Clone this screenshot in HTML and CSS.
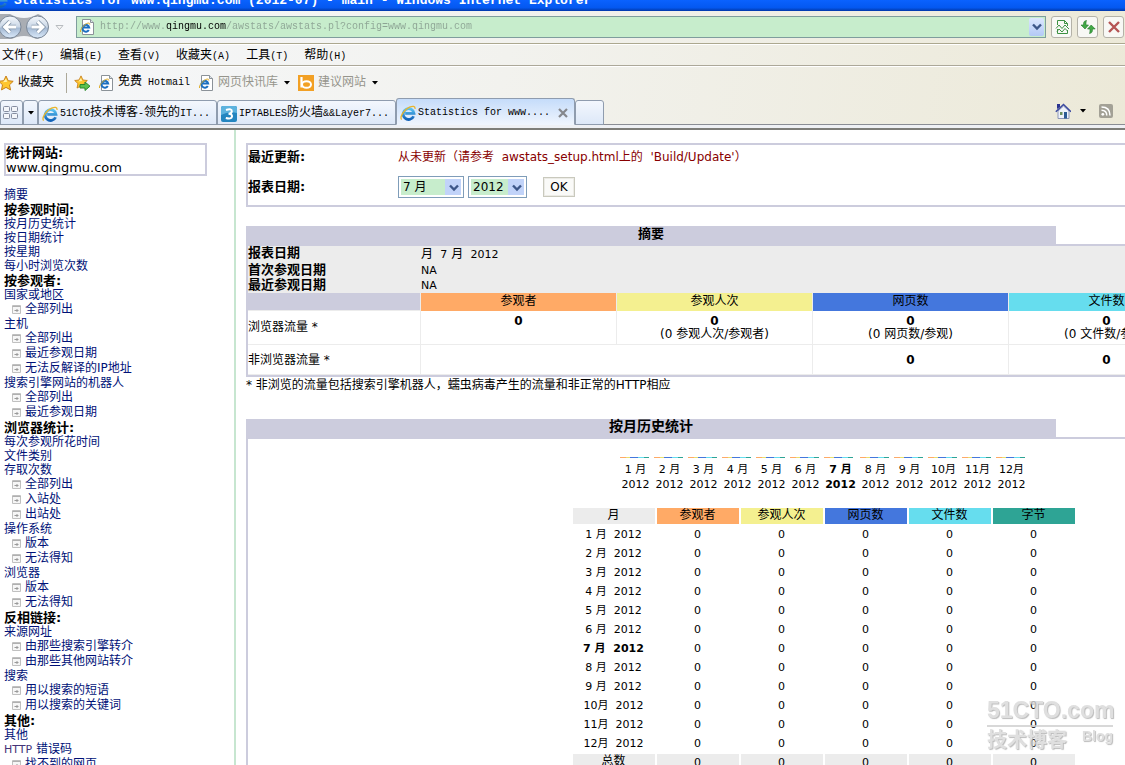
FILE: index.html
```html
<!DOCTYPE html>
<html lang="zh-CN">
<head>
<meta charset="utf-8">
<title>Statistics for www.qingmu.com (2012-07)</title>
<link rel="stylesheet" href="styles.css">
</head>
<body>
<svg class="defs" aria-hidden="true">
  <defs>
    <linearGradient id="ieblue" x1="0" y1="0" x2="0" y2="1"><stop offset="0" stop-color="#5cc4f2"/><stop offset="1" stop-color="#1262b8"/></linearGradient>
    <linearGradient id="ball" x1="0" y1="0" x2="0" y2="1"><stop offset="0" stop-color="#f6f9fc"/><stop offset=".5" stop-color="#c9d6e6"/><stop offset=".55" stop-color="#a4b9d3"/><stop offset="1" stop-color="#dbeafa"/></linearGradient>
    <symbol id="ie" viewBox="0 0 16 16">
      <path d="M13.6 11.2A5.4 5.4 0 1 1 14 8.4H5.2" fill="none" stroke="url(#ieblue)" stroke-width="2.8"/>
      <path d="M1.6 14.6C-.6 11.8 4 4.800 9.500 2.200C12.600.8 15.400.8 15 3.800" fill="none" stroke="#e9b52c" stroke-width="1.3"/>
    </symbol>
    <symbol id="page" viewBox="0 0 16 16">
      <path d="M3.500.5H11.500L14.500 3.500V15.500H3.500Z" fill="#fff" stroke="#8b9298"/>
      <path d="M11.500.5V3.500H14.500" fill="#dde3ea" stroke="#8b9298"/>
      <path d="M9.800 11A3.400 3.400 0 1 1 10.200 8.600H4.500" fill="none" stroke="#1b6fc0" stroke-width="2"/>
      <path d="M1.500 13C1 10.500 4 6.500 7.500 4.600C9.600 3.600 11.200 3.900 10.800 5.600" fill="none" stroke="#dfae2c"/>
    </symbol>
    <symbol id="star" viewBox="0 0 16 16"><path d="M8 1L10.200 5.700L15.200 6.300L11.500 9.800L12.500 14.900L8 12.400L3.500 14.900L4.500 9.800L.8 6.300L5.800 5.700Z" fill="#ffc62e" stroke="#c8801a"/><path d="M8 3.500L9.300 6.800L5 7.300Z" fill="#fff0a8"/></symbol>
    <symbol id="caret" viewBox="0 0 6 4"><path d="M0 0H6L3 3.500Z" fill="#000"/></symbol>
    <symbol id="chev" viewBox="0 0 10 8"><path d="M1 1.500L5 5.500L9 1.500" fill="none" stroke="#3c5688" stroke-width="2.400"/></symbol>
    <symbol id="sub" viewBox="0 0 9 9"><path d="M.5.5H8.500V8.500H.5Z" fill="#f6f6f6" stroke="#c0c0c0"/><path d="M.5 1.500H8.500" stroke="#b0b0b0"/><path d="M2.500 5.500H6.500M5 4V7" stroke="#999"/></symbol>
  </defs>
</svg>

<header class="browser">
  <div class="titlebar"><svg class="i16"><use href="#ie"/></svg><span>Statistics for www.qingmu.com (2012-07) - main - Windows Internet Explorer</span></div>

  <div class="address">
    <svg class="navballs" viewBox="0 0 66 28" role="img" aria-label="后退 前进">
      <path d="M0 1H38A13 13 0 0 1 38 26H0Z" fill="#a9adb3"/>
      <path d="M10 1Q24 9 38 1Z" fill="#f4f6f8"/>
      <path d="M10 27Q24 19 38 27Z" fill="#f4f6f8"/>
      <circle cx="10" cy="14" r="11" fill="url(#ball)" stroke="#7a8797"/>
      <circle cx="37.500" cy="14" r="11" fill="url(#ball)" stroke="#7a8797"/>
      <path d="M16 14H5M10 8.500L4.500 14L10 19.500" fill="none" stroke="#8496ab" stroke-width="4.500"/>
      <path d="M16 14H5M10 8.500L4.500 14L10 19.500" fill="none" stroke="#fff" stroke-width="2.800"/>
      <path d="M31.500 14H42.500M37.500 8.500L43 14L37.500 19.500" fill="none" stroke="#8496ab" stroke-width="4.500"/>
      <path d="M31.500 14H42.500M37.500 8.500L43 14L37.500 19.500" fill="none" stroke="#fff" stroke-width="2.800"/>
      <path d="M56 12.500H63L59.500 16.500Z" fill="#f6f6f6" stroke="#b8bcc0"/>
    </svg>
    <div class="urlbox">
      <svg class="i16"><use href="#page"/></svg>
      <input class="url" type="text" aria-label="地址" value="http://www.qingmu.com/awstats/awstats.pl?config=www.qingmu.com">
      <button class="drop" aria-label="显示地址"><svg class="chev"><use href="#chev"/></svg></button>
    </div>
    <div class="navbtns">
      <button class="tool" aria-label="兼容性视图"><svg class="i16" viewBox="0 0 16 16" fill="none" stroke="#3d9142"><path d="M3.500 6V1.500H10.500L13.500 4.500V7M10.500 1.500V4.500H13.500M3.500 10V14.500H13.500V11"/><path d="M2 9.500L5 6L8 9.500L11 6L15 10M3 12.500L5 10L8 13L11 9.500L13.500 12"/></svg></button>
      <button class="tool" aria-label="刷新"><svg class="i16" viewBox="0 0 16 16"><path d="M6.500 1.500C3.500 2 3.500 4 3.500 6H1L5 10L8.500 6H6C6 4 6 3 6.500 1.500Z" fill="#42a846" stroke="#23782a" stroke-width=".6"/><path d="M9.500 14.500C12.500 14 12.500 12 12.500 10H15.200L11.200 6L7.500 10H10C10 12 10 13 9.500 14.500Z" fill="#42a846" stroke="#23782a" stroke-width=".6"/></svg></button>
      <button class="tool" aria-label="停止"><svg class="i16" viewBox="0 0 16 16"><path d="M3 3L13 13M13 3L3 13" stroke="#b55454" stroke-width="2.400"/></svg></button>
    </div>
  </div>

  <nav class="menu">
    <a href="#">文件<span class="en">(F)</span></a><a href="#">编辑<span class="en">(E)</span></a><a href="#">查看<span class="en">(V)</span></a><a href="#">收藏夹<span class="en">(A)</span></a><a href="#">工具<span class="en">(T)</span></a><a href="#">帮助<span class="en">(H)</span></a>
  </nav>

  <div class="favs">
    <button class="fav first"><svg class="i16"><use href="#star"/></svg>收藏夹</button>
    <button class="fav add" aria-label="添加到收藏夹栏"><svg class="i16" viewBox="0 0 16 16"><use href="#star" width="14" height="14"/><path d="M6 9.500H11V7L16 11.200L11 15.500V13H6Z" fill="#5cc04e" stroke="#2c8a2c"/></svg></button>
    <a class="fav" href="#"><svg class="i16"><use href="#page"/></svg><span>免费<span class="en">&nbsp;Hotmail</span></span></a>
    <a class="fav dim" href="#"><svg class="i16"><use href="#page"/></svg>网页快讯库<svg class="caret"><use href="#caret"/></svg></a>
    <a class="fav dim" href="#"><svg class="i16" viewBox="0 0 16 16"><rect width="16" height="16" fill="#f2a024"/><path d="M3.500 2V12.500" stroke="#fff" stroke-width="2.200"/><ellipse cx="8.500" cy="9.500" rx="4.500" ry="3.300" fill="none" stroke="#fff" stroke-width="2"/></svg>建议网站<svg class="caret"><use href="#caret"/></svg></a>
  </div>

  <div class="tabs">
    <button class="quick" aria-label="快速导航选项卡"><svg class="i16" viewBox="0 0 16 16" fill="#f4f6fa" stroke="#858da0"><rect x=".5" y="1.500" width="6" height="5" rx="1"/><rect x="8.500" y="1.500" width="6" height="5" rx="1"/><rect x=".5" y="8.500" width="6" height="5" rx="1"/><rect x="8.500" y="8.500" width="6" height="5" rx="1"/></svg></button>
    <button class="quick narrow" aria-label="选项卡列表"><svg class="caret"><use href="#caret"/></svg></button>
    <a class="tab" href="#"><svg class="i16"><use href="#ie"/></svg><span><span class="en">51CTO</span>技术博客<span class="en">-</span>领先的<span class="en">IT...</span></span></a>
    <a class="tab" href="#"><svg class="i16" viewBox="0 0 16 16"><rect width="16" height="16" rx="2" fill="#2385c0"/><path d="M0 2Q0 0 2 0H14Q16 0 16 2V7Q8 5 0 9Z" fill="#5cb2de"/><path d="M5 4Q11 2 10.800 5.500Q10.500 7.700 7.500 7.700Q11.300 7.800 11 10.500Q10.500 13.500 4.800 12" fill="none" stroke="#fff" stroke-width="2"/></svg><span><span class="en">IPTABLES</span>防火墙<span class="en">&amp;&amp;Layer7...</span></span></a>
    <a class="tab active" href="#"><svg class="i16"><use href="#ie"/></svg><span class="en">Statistics for www....</span><svg class="close" viewBox="0 0 10 10"><path d="M1 1L9 9M9 1L1 9" stroke="#85878c" stroke-width="2.200"/></svg></a>
    <button class="newtab" aria-label="新选项卡"></button>
    <div class="cmds">
      <svg class="i16" viewBox="0 0 16 16"><path d="M3 8V15.500H14V8L8.500 3Z" fill="#eef2fb" stroke="#8c96b8"/><path d="M.8 8.700L8.500 1.500L16 8.700" fill="none" stroke="#3b49a0" stroke-width="1.500"/><path d="M2 1H5V4L2 6Z" fill="#2a3390"/><path d="M9 9H12V15.500H9Z" fill="#2b5a94"/><path d="M5 9H7.500V12H5Z" fill="#6a8f5e"/></svg>
      <svg class="caret"><use href="#caret"/></svg>
      <svg class="rss" viewBox="0 0 14 14"><rect width="14" height="14" rx="2" fill="#a3a196"/><circle cx="3.800" cy="10.300" r="1.400" fill="#fff"/><path d="M2.500 6.200Q7.800 6.200 7.800 11.500M2.500 3Q11 3 11 11.500" fill="none" stroke="#fff" stroke-width="1.500"/></svg>
    </div>
  </div>
</header>

<div class="frames">
  <aside class="side">
    <div class="site"><b>统计网站:</b><span>www.qingmu.com</span></div>
    <ul class="toc">
      <li><a href="#">摘要</a></li>
      <li class="head">按参观时间:</li>
      <li><a href="#">按月历史统计</a></li>
      <li><a href="#">按日期统计</a></li>
      <li><a href="#">按星期</a></li>
      <li><a href="#">每小时浏览次数</a></li>
      <li class="head">按参观者:</li>
      <li><a href="#">国家或地区</a></li>
      <li class="sub"><svg><use href="#sub"/></svg><a href="#">全部列出</a></li>
      <li><a href="#">主机</a></li>
      <li class="sub"><svg><use href="#sub"/></svg><a href="#">全部列出</a></li>
      <li class="sub"><svg><use href="#sub"/></svg><a href="#">最近参观日期</a></li>
      <li class="sub"><svg><use href="#sub"/></svg><a href="#">无法反解译的IP地址</a></li>
      <li><a href="#">搜索引擎网站的机器人</a></li>
      <li class="sub"><svg><use href="#sub"/></svg><a href="#">全部列出</a></li>
      <li class="sub"><svg><use href="#sub"/></svg><a href="#">最近参观日期</a></li>
      <li class="head">浏览器统计:</li>
      <li><a href="#">每次参观所花时间</a></li>
      <li><a href="#">文件类别</a></li>
      <li><a href="#">存取次数</a></li>
      <li class="sub"><svg><use href="#sub"/></svg><a href="#">全部列出</a></li>
      <li class="sub"><svg><use href="#sub"/></svg><a href="#">入站处</a></li>
      <li class="sub"><svg><use href="#sub"/></svg><a href="#">出站处</a></li>
      <li><a href="#">操作系统</a></li>
      <li class="sub"><svg><use href="#sub"/></svg><a href="#">版本</a></li>
      <li class="sub"><svg><use href="#sub"/></svg><a href="#">无法得知</a></li>
      <li><a href="#">浏览器</a></li>
      <li class="sub"><svg><use href="#sub"/></svg><a href="#">版本</a></li>
      <li class="sub"><svg><use href="#sub"/></svg><a href="#">无法得知</a></li>
      <li class="head">反相链接:</li>
      <li><a href="#">来源网址</a></li>
      <li class="sub"><svg><use href="#sub"/></svg><a href="#">由那些搜索引擎转介</a></li>
      <li class="sub"><svg><use href="#sub"/></svg><a href="#">由那些其他网站转介</a></li>
      <li><a href="#">搜索</a></li>
      <li class="sub"><svg><use href="#sub"/></svg><a href="#">用以搜索的短语</a></li>
      <li class="sub"><svg><use href="#sub"/></svg><a href="#">用以搜索的关键词</a></li>
      <li class="head">其他:</li>
      <li><a href="#">其他</a></li>
      <li class="latin"><a href="#"><span class="lat visited">HTTP</span> 错误码</a></li>
      <li class="sub"><svg><use href="#sub"/></svg><a href="#">找不到的网页</a></li>
    </ul>
  </aside>

  <main class="main">
    <div class="report">
      <form class="panel">
        <b>最近更新:</b>
        <span class="warn">从未更新（请参考&nbsp; awstats_setup.html上的&nbsp; 'Build/Update'）</span>
        <b>报表日期:</b>
        <div class="pick">
          <span class="sel month"><select aria-label="月份"><option>7 月</option></select><svg class="chev"><use href="#chev"/></svg></span>
          <span class="sel"><select aria-label="年份"><option>2012</option></select><svg class="chev"><use href="#chev"/></svg></span>
          <button class="ok" type="button">OK</button>
        </div>
      </form>

      <section>
        <h2 class="title">摘要</h2>
        <table class="summary">
          <colgroup><col class="label"><col><col><col><col><col></colgroup>
          <tbody class="meta">
            <tr><th>报表日期</th><td colspan="5">月 <span class="lat"> 7</span> 月 <span class="lat"> 2012</span></td></tr>
            <tr><th>首次参观日期</th><td colspan="5" class="lat">NA</td></tr>
            <tr><th>最近参观日期</th><td colspan="5" class="lat">NA</td></tr>
          </tbody>
          <tbody class="traffic">
            <tr class="heads"><td class="c-head"></td><th class="c-u">参观者</th><th class="c-v">参观人次</th><th class="c-p">网页数</th><th class="c-h">文件数</th><th class="c-k">字节</th></tr>
            <tr class="viewed"><td>浏览器流量 *</td><td><b>0</b><br>&nbsp;</td><td><b>0</b><br>(0 参观人次/参观者)</td><td><b>0</b><br>(0 网页数/参观)</td><td><b>0</b><br>(0 文件数/参观)</td><td><b>0</b><br>&nbsp;</td></tr>
            <tr class="other"><td>非浏览器流量 *</td><td colspan="2"></td><td><b>0</b></td><td><b>0</b></td><td><b>0</b></td></tr>
          </tbody>
        </table>
        <p class="note">* 非浏览的流量包括搜索引擎机器人，蠕虫病毒产生的流量和非正常的HTTP相应</p>
      </section>

      <section>
        <h2 class="title large">按月历史统计</h2>
        <div class="history">
          <ul class="graph">
            <li>1 月<br>2012</li><li>2 月<br>2012</li><li>3 月<br>2012</li><li>4 月<br>2012</li><li>5 月<br>2012</li><li>6 月<br>2012</li><li class="now">7 月<br>2012</li><li>8 月<br>2012</li><li>9 月<br>2012</li><li>10月<br>2012</li><li>11月<br>2012</li><li>12月<br>2012</li>
          </ul>
          <table class="months">
            <thead><tr><th class="c-m">月</th><th class="c-u">参观者</th><th class="c-v">参观人次</th><th class="c-p">网页数</th><th class="c-h">文件数</th><th class="c-k">字节</th></tr></thead>
            <tbody>
              <tr><td>1 月&nbsp; 2012</td><td>0</td><td>0</td><td>0</td><td>0</td><td>0</td></tr>
              <tr><td>2 月&nbsp; 2012</td><td>0</td><td>0</td><td>0</td><td>0</td><td>0</td></tr>
              <tr><td>3 月&nbsp; 2012</td><td>0</td><td>0</td><td>0</td><td>0</td><td>0</td></tr>
              <tr><td>4 月&nbsp; 2012</td><td>0</td><td>0</td><td>0</td><td>0</td><td>0</td></tr>
              <tr><td>5 月&nbsp; 2012</td><td>0</td><td>0</td><td>0</td><td>0</td><td>0</td></tr>
              <tr><td>6 月&nbsp; 2012</td><td>0</td><td>0</td><td>0</td><td>0</td><td>0</td></tr>
              <tr><td><b>7 月&nbsp; 2012</b></td><td>0</td><td>0</td><td>0</td><td>0</td><td>0</td></tr>
              <tr><td>8 月&nbsp; 2012</td><td>0</td><td>0</td><td>0</td><td>0</td><td>0</td></tr>
              <tr><td>9 月&nbsp; 2012</td><td>0</td><td>0</td><td>0</td><td>0</td><td>0</td></tr>
              <tr><td>10月&nbsp; 2012</td><td>0</td><td>0</td><td>0</td><td>0</td><td>0</td></tr>
              <tr><td>11月&nbsp; 2012</td><td>0</td><td>0</td><td>0</td><td>0</td><td>0</td></tr>
              <tr><td>12月&nbsp; 2012</td><td>0</td><td>0</td><td>0</td><td>0</td><td>0</td></tr>
            </tbody>
            <tfoot><tr><th>总数</th><td>0</td><td>0</td><td>0</td><td>0</td><td>0</td></tr></tfoot>
          </table>
        </div>
      </section>
    </div>
  </main>
</div>

<div class="mark"><span class="brand">51CTO.com</span><span class="blog"><span class="cn">技术博客</span><span>Blog</span></span></div>
</body>
</html>
```

FILE: styles.css
```css
* { box-sizing: border-box; }
body {
  margin: 0;
  height: 100vh;
  display: flex;
  flex-direction: column;
  overflow: hidden;
  background: #fff;
  color: #000;
  font: 12px/14px "DejaVu Sans", "Noto Sans CJK SC", sans-serif;
}
a { color: inherit; text-decoration: none; }
button { border: 0; padding: 0; background: none; color: inherit; font: inherit; }
ul { list-style: none; margin: 0; padding: 0; }
svg { flex: none; display: block; }
.defs { position: absolute; width: 0; height: 0; }
.i16 { width: 16px; height: 16px; }
.caret { width: 6px; height: 4px; }
.chev { width: 10px; height: 8px; }
.lat { font-size: 11px; }
.en { font-family: "Liberation Mono", monospace; font-size: 10px; }

/* Browser chrome */
.browser {
  flex: none;
  background: linear-gradient(100deg, #f6f8fb 0, #f2f2ee 45%, #ece9d8 100%);
  border-bottom: 2px solid #7d7d78;
  font-family: "Liberation Mono", "Noto Sans CJK SC", monospace;
}
.titlebar {
  height: 11px;
  display: flex;
  align-items: flex-end;
  gap: 6px;
  padding-bottom: 3px;
  overflow: hidden;
  background: linear-gradient(#0a62ff 0, #0458f0 70%, #0238a8 100%);
  color: #fff;
  font-size: 13px;
  font-weight: bold;
  white-space: nowrap;
}
.titlebar .i16 { margin-left: -8px; }
.address {
  height: 33px;
  display: flex;
  align-items: center;
  border-bottom: 1px solid #aca88f;
}
.navballs { width: 66px; height: 28px; margin-right: 10px; }
.urlbox {
  flex: 1;
  height: 22px;
  display: flex;
  align-items: center;
  gap: 5px;
  padding: 1px 1px 1px 2px;
  background: #c7edcc;
  border: 1px solid #7f9d9d;
}
.url {
  flex: 1;
  min-width: 0;
  border: 0;
  padding: 0;
  outline: 0;
  font: 10px/16px "Liberation Mono", monospace;
  background: linear-gradient(to right, #8da494 66px, #000 66px, #000 126px, #8da494 126px);
  background-clip: text;
  -webkit-background-clip: text;
  color: transparent;
}
.drop {
  width: 15px;
  height: 18px;
  display: grid;
  place-items: center;
  background: linear-gradient(#dce7fe, #b3c9f6);
  border-radius: 2px;
}
.navbtns { display: flex; gap: 5px; padding: 0 1px 0 5px; }
.tool {
  width: 21px;
  height: 22px;
  display: grid;
  place-items: center;
  border: 1px solid #b4b2a8;
  border-radius: 3px;
  background: #f8f8f5;
}
.menu {
  height: 22px;
  display: flex;
  align-items: center;
  gap: 16px;
  padding: 2px 0 0 2px;
  border-top: 1px solid #fff;
  border-bottom: 1px solid #aca899;
}
.favs { height: 32px; display: flex; align-items: center; border-top: 1px solid #fff; }
.fav { display: flex; align-items: center; gap: 4px; margin-right: 8px; white-space: nowrap; }
.fav.first { margin: 0 12px 0 -2px; }
.fav.add { border-left: 1px solid #aca899; padding: 2px 0 2px 7px; }
.dim { color: #96958c; }
.fav .caret { margin-left: 2px; }
.tabs {
  height: 30px;
  display: flex;
  align-items: flex-end;
  border-bottom: 3px solid #eef0f4;
  background: linear-gradient(#8a8d94, #8a8d94) bottom / 100% 1px no-repeat;
}
.quick, .tab, .newtab {
  height: 25px;
  display: flex;
  align-items: center;
  border: 1px solid #8f9cae;
  border-radius: 3px 3px 0 0;
  background: linear-gradient(#f3f7fd, #dde8f8);
}
.quick { width: 23px; padding-left: 2px; }
.narrow { width: 15px; padding-left: 4px; }
.tab { width: 179px; gap: 2px; padding: 2px 0 0 3px; white-space: nowrap; }
.active { height: 27px; background: linear-gradient(#c5dcfa, #eef4fd); border-bottom-color: #eef4fd; }
.close { width: 10px; height: 10px; margin-left: auto; margin-right: 6px; }
.newtab { width: 29px; }
.cmds { display: flex; align-items: center; gap: 9px; margin-left: auto; padding: 0 12px 6px 0; }
.rss { width: 14px; height: 14px; margin-left: 4px; }

/* Frames */
.frames { flex: 1; min-height: 0; display: flex; }
.side {
  flex: none;
  width: 236px;
  padding: 13px 0 0 4px;
  overflow: hidden;
  border-right: 2px solid #c7e6d0;
}
.site {
  width: 203px;
  height: 33px;
  margin-bottom: 12px;
  display: flex;
  flex-direction: column;
  border: 2px solid #ccccdd;
  font-size: 13px;
  line-height: 15px;
}
.toc { color: #001177; white-space: nowrap; }
.toc .head { color: #000; font-size: 13px; font-weight: bold; line-height: 15px; }
.toc .latin { line-height: 15px; }
.toc .sub { display: flex; align-items: center; gap: 4px; padding-left: 8px; line-height: 15px; }
.sub svg { width: 9px; height: 9px; }
.visited { color: #443377; }

.main { flex: 1; min-width: 0; overflow: hidden; padding: 13px 0 0 10px; }
.report { min-width: 1157px; }
.panel {
  display: grid;
  grid-template-columns: 150px 1fr;
  grid-template-rows: 24px 36px;
  align-items: center;
  margin-bottom: 19px;
  border: 2px solid #ccccdd;
}
.panel b { font-size: 13px; }
.warn { color: #880000; white-space: nowrap; }
.pick { display: flex; align-items: center; gap: 4px; }
.sel { position: relative; height: 22px; border: 1px solid #7f9db9; padding: 2px; }
.sel select {
  appearance: none;
  width: 53px;
  height: 16px;
  display: block;
  border: 0;
  padding: 0 0 0 2px;
  background: #c7edcc;
  color: #000;
  border-right: 16px solid #c1d3f9;
  font: 12px/16px "DejaVu Sans", "Noto Sans CJK SC", sans-serif;
}
.sel.month select { width: 60px; }
.sel .chev { position: absolute; right: 4px; top: 7px; pointer-events: none; }
.ok {
  width: 32px;
  height: 20px;
  margin-left: 12px;
  border: 1px solid #c9c9bd;
  box-shadow: inset 0 0 0 1px #ecebe6;
  background: #fafaf8;
}
.title {
  width: 70%;
  height: 18px;
  margin: 0;
  background: #ccccdd;
  font-size: 13px;
  line-height: 16px;
  text-align: center;
}
.title.large { font-size: 14px; line-height: 14px; }
.summary {
  width: 100%;
  table-layout: fixed;
  border-collapse: separate;
  border-spacing: 0;
  border: 2px solid #ccccdd;
}
.label { width: 173px; }
th, td { padding: 0; }
.meta th { text-align: left; font-size: 13px; }
.meta th, .meta td { background: #ececec; height: 15px; line-height: 15px; white-space: pre; }
.meta tr:first-child > * { height: 17px; }
.meta th { line-height: 13px; vertical-align: top; }
.heads th, .heads td { height: 18px; font-weight: normal; border-right: 1px solid #ececec; }
.heads th { padding-bottom: 2px; }
.traffic td { text-align: center; border-right: 1px solid #ececec; border-bottom: 1px solid #ececec; }
.traffic td:first-child { text-align: left; }
.viewed td { height: 34px; line-height: 13px; }
.other td { height: 30px; }
.note { margin: 0 0 27px; padding-top: 1px; line-height: 14px; white-space: nowrap; }
.c-head { background: #ccccdd; }
.c-m { background: #ececec; }
.c-u { background: #ffaa66; }
.c-v { background: #f4f090; }
.c-p { background: #4477dd; }
.c-h { background: #66ddee; }
.c-k { background: #2ea495; }
.history {
  display: flex;
  flex-direction: column;
  align-items: center;
  padding: 18px 2px 0 0;
  border: 2px solid #ccccdd;
}
.graph { display: flex; margin-bottom: 14px; font-size: 11px; line-height: 15px; text-align: center; }
.graph li {
  width: 34px;
  padding-top: 5px;
  background: linear-gradient(to right, #ffaa66 6px, #e8e070 6px 10px, #4477dd 10px 18px, #66ddee 18px 24px, #2ea495 24px) 1px 0 / 29px 1px no-repeat;
}
.graph .now { width: 36px; font-weight: bold; }
.months { border-spacing: 2px; font-size: 11px; text-align: center; line-height: 16px; }
.months th { width: 82px; height: 16px; font-size: 12px; font-weight: normal; line-height: 14px; vertical-align: top; }
.months td { height: 17px; }
.months tfoot > tr > * { background: #ececec; }

/* Blog watermark over the page corner */
.mark {
  position: absolute;
  right: 12px;
  bottom: 12px;
  width: 126px;
  color: #d8d8d8;
  opacity: 0.8;
  font-family: "Liberation Sans", "Noto Sans CJK SC", sans-serif;
  font-weight: bold;
  text-shadow: 1px 1px 1px #aaa;
  pointer-events: none;
}
.brand { display: block; font-size: 23px; line-height: 30px; border-bottom: 2px solid #cfcfcf; }
.blog { display: flex; justify-content: space-between; font-size: 14px; line-height: 18px; }
.cn { font-size: 20px; line-height: 26px; }
```
